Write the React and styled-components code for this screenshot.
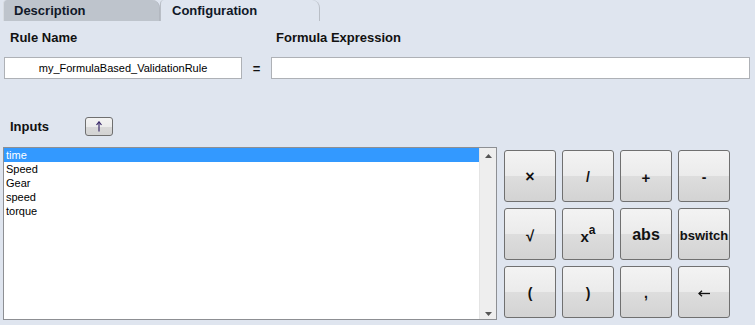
import React from 'react';
import styled, { createGlobalStyle } from 'styled-components';

const Global = createGlobalStyle`
  body {
    margin: 0;
    background: #dfe5ef;
    font-family: "Liberation Sans", Arial, sans-serif;
    color: #111;
  }
`;

const Page = styled.div`
  width: 755px;
  height: 325px;
  overflow: hidden;
  background: #dfe5ef;
`;

const TabBar = styled.div`
  display: flex;
  height: 21px;
  padding-left: 3px;
  align-items: flex-end;
`;

const Tab = styled.div`
  box-sizing: border-box;
  height: 21px;
  width: ${p => p.$w}px;
  padding-left: ${p => p.$pad}px;
  font-size: 13px;
  font-weight: bold;
  line-height: 21px;
  color: #101828;
  background: ${p => (p.$active ? '#dfe5ef' : '#bec4cc')};
  border-left: 1px solid ${p => (p.$active ? '#b9bec6' : '#d8dce2')};
  border-right: 1px solid ${p => (p.$active ? '#b9bec6' : '#b3b8c0')};
  border-radius: 4px 8px 0 0;
`;

const Labels = styled.div`
  display: flex;
  padding: 9px 0 0 10px;
  height: 16px;
  font-size: 13px;
  font-weight: bold;
  line-height: 16px;
`;

const Label = styled.div`
  width: ${p => p.$w || 'auto'};
`;

const FieldRow = styled.div`
  display: flex;
  align-items: center;
  margin-top: 11px;
  padding-left: 4px;
  height: 22px;
`;

const Field = styled.div`
  box-sizing: border-box;
  height: 22px;
  width: ${p => p.$w}px;
  background: #fff;
  border: 1px solid #aeb1b6;
  font-size: 11px;
  line-height: 20px;
  text-align: center;
  color: #000;
`;

const Equals = styled.div`
  width: 29px;
  text-align: center;
  font-size: 13px;
  font-weight: bold;
`;

const InputsRow = styled.div`
  display: flex;
  align-items: center;
  margin-top: 37px;
  padding-left: 10px;
  height: 20px;
`;

const InputsLabel = styled.div`
  width: 75px;
  font-size: 13px;
  font-weight: bold;
`;

const SmallButton = styled.div`
  box-sizing: border-box;
  width: 28px;
  height: 19px;
  border: 1px solid #6f6f6f;
  border-radius: 3px;
  background: linear-gradient(#f3f3f3 0%, #ececec 50%, #d9d9d9 51%, #d3d3d3 100%);
  display: flex;
  align-items: center;
  justify-content: center;
`;

const Bottom = styled.div`
  display: flex;
  margin-top: 11px;
  padding-left: 3px;
  gap: 7px;
`;

const List = styled.div`
  box-sizing: border-box;
  width: 494px;
  height: 173px;
  border: 1px solid #8d8f93;
  background: #fff;
  display: flex;
`;

const Items = styled.div`
  flex: 1;
`;

const Item = styled.div`
  height: 14px;
  padding-left: 2px;
  font-size: 11px;
  line-height: 14px;
  color: ${p => (p.$selected ? '#fff' : '#000')};
  background: ${p => (p.$selected ? '#3399ff' : 'transparent')};
`;

const Scrollbar = styled.div`
  width: 17px;
  background: #eeeeee;
  border-left: 1px solid #e4e4e4;
  display: flex;
  flex-direction: column;
  justify-content: space-between;
  align-items: center;
  padding: 6px 0 3px;
  box-sizing: border-box;
`;

const Keypad = styled.div`
  display: grid;
  grid-template-columns: repeat(4, 52px);
  grid-auto-rows: 52px;
  column-gap: 6px;
  row-gap: 6px;
  margin-top: 3px;
`;

const Key = styled.div`
  box-sizing: border-box;
  border: 1px solid #707070;
  border-radius: 3px;
  background: linear-gradient(#f3f3f3 0%, #ebebeb 50%, #dddddd 51%, #d3d3d3 100%);
  display: flex;
  align-items: center;
  justify-content: center;
  padding-top: 2px;
  font-size: ${p => p.$size || 14}px;
  font-weight: bold;
  color: #111;
`;

const Sup = styled.sup`
  font-size: 12px;
  position: relative;
  top: -2px;
`;

const UpArrow = () => (
  <svg width="6" height="11" viewBox="0 0 6 11">
    <path d="M3 10.5V1.5" stroke="#3a2a6a" strokeWidth="1.2" />
    <path d="M0.5 4L3 0.8L5.5 4" fill="none" stroke="#3a2a6a" strokeWidth="1.2" />
  </svg>
);

const LeftArrow = () => (
  <svg width="12" height="7" viewBox="0 0 12 7">
    <path d="M1 3.5H12" stroke="#111" strokeWidth="1.3" />
    <path d="M4 0.8L1 3.5L4 6.2" fill="none" stroke="#111" strokeWidth="1.3" />
  </svg>
);

const Tri = ({ down }) => (
  <svg width="7" height="4" viewBox="0 0 7 4">
    <path d={down ? 'M0 0H7L3.5 4Z' : 'M0 4H7L3.5 0Z'} fill="#555" />
  </svg>
);

const keys = [
  ['×', 16], ['/', 14], ['+', 15], ['-', 14],
  ['√', 15], ['xa', 15], ['abs', 16], ['bswitch', 13],
  ['(', 14], [')', 14], [',', 14], ['back', 14],
];

const renderKey = k => {
  if (k === 'xa') return <span>x<Sup>a</Sup></span>;
  if (k === 'back') return <LeftArrow />;
  return k;
};

export default function App() {
  return (
    <Page>
      <Global />
      <TabBar>
        <Tab $w={157} $pad={10}>Description</Tab>
        <Tab $w={160} $pad={11} $active>Configuration</Tab>
      </TabBar>
      <Labels>
        <Label $w="266px">Rule Name</Label>
        <Label>Formula Expression</Label>
      </Labels>
      <FieldRow>
        <Field $w={238}>my_FormulaBased_ValidationRule</Field>
        <Equals>=</Equals>
        <Field $w={479} />
      </FieldRow>
      <InputsRow>
        <InputsLabel>Inputs</InputsLabel>
        <SmallButton><UpArrow /></SmallButton>
      </InputsRow>
      <Bottom>
        <List>
          <Items>
            {['time', 'Speed', 'Gear', 'speed', 'torque'].map((t, i) => (
              <Item key={t} $selected={i === 0}>{t}</Item>
            ))}
          </Items>
          <Scrollbar>
            <Tri />
            <Tri down />
          </Scrollbar>
        </List>
        <Keypad>
          {keys.map(([k, s]) => (
            <Key key={k} $size={s}>{renderKey(k)}</Key>
          ))}
        </Keypad>
      </Bottom>
    </Page>
  );
}
